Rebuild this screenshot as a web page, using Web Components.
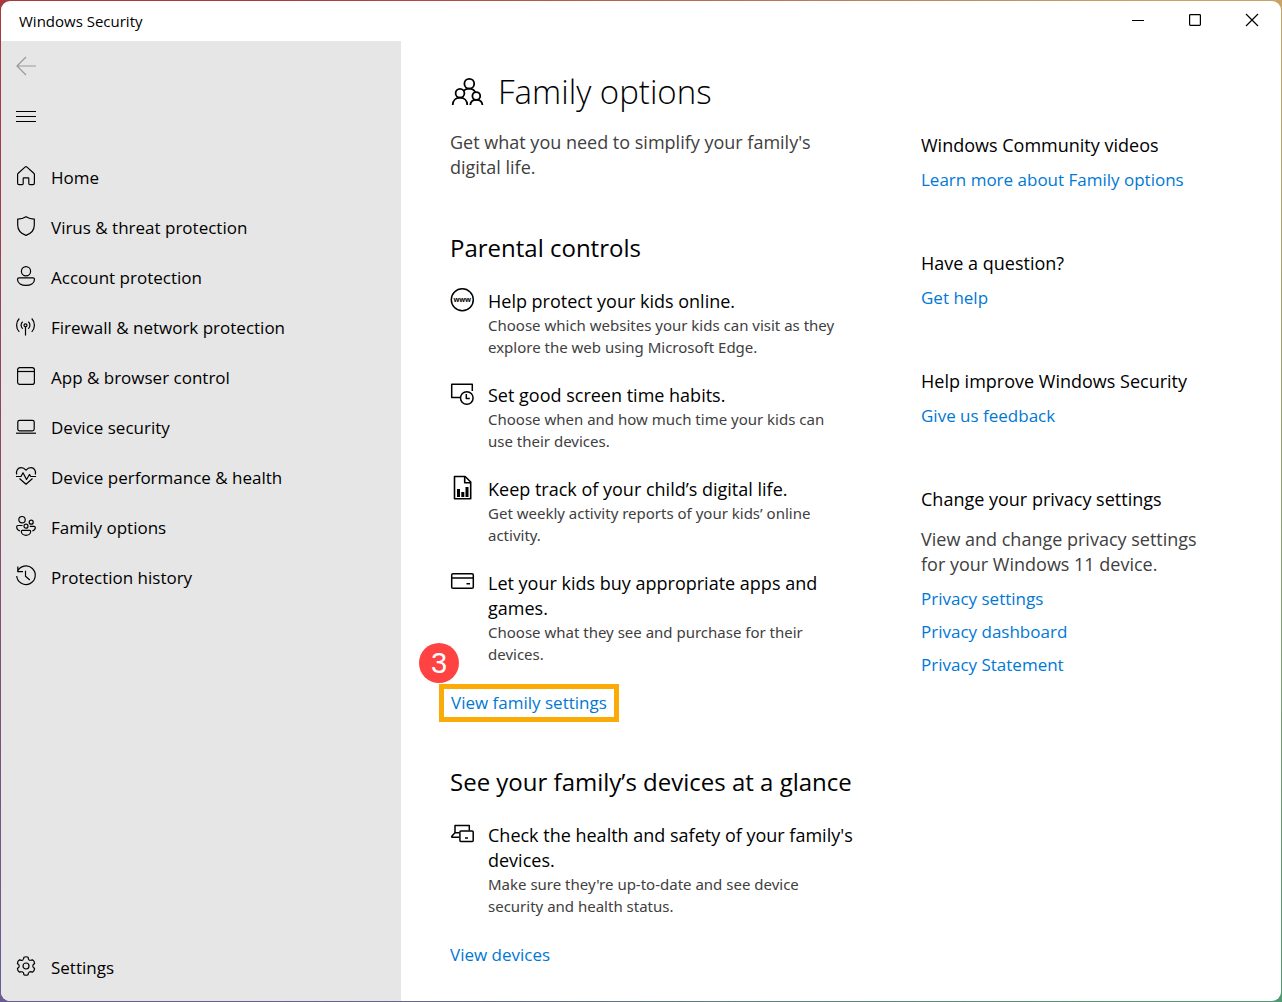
<!DOCTYPE html>
<html lang="en">
<head>
<meta charset="utf-8">
<title>Windows Security</title>
<style>
  html, body { margin: 0; }
  body {
    font-family: "Open Sans", "Noto Sans", sans-serif;
    color: #000;
    background: linear-gradient(#a8383e, #6a5c92);
  }
</style>
</head>
<body>
<app-window>
  <title-bar slot="title">Windows Security</title-bar>
  <side-nav slot="nav">
    <nav-item icon="home">Home</nav-item>
    <nav-item icon="shield">Virus &amp; threat protection</nav-item>
    <nav-item icon="account">Account protection</nav-item>
    <nav-item icon="firewall">Firewall &amp; network protection</nav-item>
    <nav-item icon="app">App &amp; browser control</nav-item>
    <nav-item icon="laptop">Device security</nav-item>
    <nav-item icon="heart">Device performance &amp; health</nav-item>
    <nav-item icon="family">Family options</nav-item>
    <nav-item icon="history">Protection history</nav-item>
    <nav-item slot="footer" icon="gear">Settings</nav-item>
  </side-nav>
  <family-page>
    <page-header icon="people">
      Family options
      <span slot="intro">Get what you need to simplify your family's digital life.</span>
    </page-header>
    <feature-group heading="Parental controls">
      <feature-item icon="www">Help protect your kids online.<span slot="detail">Choose which websites your kids can visit as they explore the web using Microsoft Edge.</span></feature-item>
      <feature-item icon="screentime">Set good screen time habits.<span slot="detail">Choose when and how much time your kids can use their devices.</span></feature-item>
      <feature-item icon="report">Keep track of your child’s digital life.<span slot="detail">Get weekly activity reports of your kids’ online activity.</span></feature-item>
      <feature-item icon="card">Let your kids buy appropriate apps and games.<span slot="detail">Choose what they see and purchase for their devices.</span></feature-item>
      <step-marker slot="action" step="3"><text-link>View family settings</text-link></step-marker>
    </feature-group>
    <feature-group heading="See your family’s devices at a glance">
      <feature-item icon="devices">Check the health and safety of your family's devices.<span slot="detail">Make sure they're up-to-date and see device security and health status.</span></feature-item>
      <text-link slot="action">View devices</text-link>
    </feature-group>
    <help-section slot="aside" heading="Windows Community videos">
      <text-link>Learn more about Family options</text-link>
    </help-section>
    <help-section slot="aside" heading="Have a question?">
      <text-link>Get help</text-link>
    </help-section>
    <help-section slot="aside" heading="Help improve Windows Security">
      <text-link>Give us feedback</text-link>
    </help-section>
    <help-section slot="aside" heading="Change your privacy settings">
      <span slot="text">View and change privacy settings for your Windows 11 device.</span>
      <text-link>Privacy settings</text-link>
      <text-link>Privacy dashboard</text-link>
      <text-link>Privacy Statement</text-link>
    </help-section>
  </family-page>
</app-window>

<script>
const TOOTH = '<path d="M-2.5-6.8L-2.1-8.7Q0-9.8 2.1-8.7L2.5-6.8Q3.2-5.6 4.64-5.57"/>';
const ICONS = {
  back: [20, 20, '<path stroke="#999" d="M20 10H1M10 1L1 10l9 9"/>'],
  menu: [20, 20, '<path stroke-width="1" d="M0 5.5h20M0 10.5h20M0 15.5h20"/>'],
  home: [20, 20, '<path d="M1.6 8.6q0-.8.6-1.3L9 1.1q1-.8 2 0l6.800 6.200q.6.500.6 1.300V17q0 1.600-1.500 1.600h-3q-1.100 0-1.100-1.100V12.400q0-.6-.6-.6H7.800q-.6 0-.6.6v5.100q0 1.100-1.100 1.100H3.100Q1.600 18.600 1.600 17z"/>'],
  shield: [20, 20, '<path d="M10 .7Q13.600 3 18.300 3.100V9c0 5-3 8.500-8.300 10.400C4.700 17.500 1.700 14 1.700 9V3.100Q6.400 3 10 .7z"/>'],
  account: [20, 20, '<circle cx="10" cy="5.200" r="4.600"/><path d="M3 11.900h14q1.500 0 1.500 1.500c0 4-4.200 6-8.500 6s-8.500-2-8.500-6q0-1.500 1.500-1.500z"/>'],
  firewall: [20, 20, '<circle cx="9.500" cy="9.300" r="1.500"/><path d="M9.500 10.800V19.600M6.700 5.800a4.600 4.600 0 0 0 0 7M12.300 5.800a4.600 4.600 0 0 1 0 7M3.300 2.500a9.500 9.500 0 0 0 0 13.300M15.700 2.500a9.500 9.500 0 0 1 0 13.300"/>'],
  app: [20, 20, '<rect x="1.600" y="1.600" width="16.800" height="16.800" rx="2.200"/><path d="M1.600 5.500h16.800"/>'],
  laptop: [20, 20, '<rect x="1.800" y="4.300" width="16.400" height="10.600" rx="1.800"/><path d="M0 17.200h20"/>'],
  heart: [20, 20, '<path d="M.7 8.500C-.3 4.500 2 1.600 5 1.600q3 0 5 2.600 2-2.600 5-2.600c3 0 5.300 2.900 4.300 6.900M0 10.500h5l2-3.700 3.500 6.700 3-5 1.300 2H20M3.500 12.500L10 18.200l6.500-5.700"/>'],
  family: [20, 20, '<circle cx="6" cy="3.700" r="3.200"/><circle cx="15.200" cy="6.200" r="2"/><circle cx="10" cy="10.200" r="2"/><path d="M6.300 14.300h7.400q1 0 1 1c0 2.700-2.500 4.100-4.700 4.100s-4.700-1.400-4.700-4.100q0-1 1-1zM6.500 9.500H2Q.7 9.500.7 10.800c0 2 1 3.500 3.200 4.100M13.800 10.300H18q1.300 0 1.300 1.300c0 1.700-.9 2.900-3 3.400"/>'],
  history: [20, 20, '<path d="M1.400 5.600A9.300 9.300 0 1 1 .7 10M1.800.5V5.700H7M9.500 4.700v5.500l4.300 3.800"/>'],
  gear: [20, 20, '<circle cx="10" cy="10" r="3"/>' + [0, 60, 120, 180, 240, 300].map(a => `<g transform="translate(10 10) rotate(${a})">${TOOTH}</g>`).join('')],
  people: [34, 28, '<g stroke-width="1.800"><circle cx="19.300" cy="5.700" r="4.900"/><circle cx="10" cy="15.300" r="4.400"/><circle cx="26.300" cy="18" r="3.900"/><path d="M2.700 27c.2-4.500 3.200-7.300 7.300-7.300s7.100 2.800 7.300 7.300M20.300 27c.2-3.100 2.600-5.100 6-5.100s5.900 2 6.100 5.100M13.700 12.600c1.400-1.300 3.300-2 5.600-2 2.800 0 4.800 1.300 5.900 3.600"/></g>'],
  www: [24, 24, '<circle cx="12.300" cy="10.700" r="11" stroke-width="1.500"/><g font-size="7" font-weight="700" text-anchor="middle" fill="#000" stroke="none"><text x="12.300" y="12.500">w</text><text x="6.600" y="12.500">w</text><text x="18" y="12.500">w</text></g>'],
  screentime: [24, 24, '<g stroke-width="1.500"><path d="M11 14.500H1.700V1.200h20.600V8"/><circle cx="16.800" cy="15" r="6.300"/><path d="M16.300 11v4.500h3.500"/></g>'],
  report: [24, 24, '<g stroke-width="1.600"><path d="M4.500-.5h10.700L20.700 5v16.700H4.500z"/><path d="M14.700-.5V5.800h6"/></g><path stroke="none" fill="#000" d="M7 12h3v8H7zM11.300 15h3v5h-3zM15.500 10h3v10h-3z"/>'],
  card: [24, 24, '<g stroke-width="1.500"><rect x="1.700" y="2.700" width="21.600" height="14.600" rx="1.300"/><path d="M1.700 7h21.600M16.500 12.800h3.500"/></g>'],
  devices: [24, 24, '<g stroke-width="1.500"><path d="M9.300 14.300H2.200q-.9-.1-.4-1L5 9.800V2.500h14.300V7.500M5 9.800H9.300"/><rect x="9.900" y="7.900" width="13.300" height="10.700" rx="1"/><path d="M15 15h3"/></g>'],
  minimize: [14, 14, '<path d="M0 7.500h12"/>'],
  maximize: [14, 14, '<rect x=".6" y="1.600" width="10.800" height="10.800" rx=".8"/>'],
  close: [14, 14, '<path d="M0 1l12 12M12 1L0 13"/>']
};

function define(name, html) {
  const template = document.createElement('template');
  customElements.define(name, class extends HTMLElement {
    connectedCallback() {
      if (this.shadowRoot) return;
      template.innerHTML = typeof html === 'function' ? html(this) : html;
      this.attachShadow({ mode: 'open' }).append(template.content.cloneNode(true));
    }
  });
}

define('ui-icon', el => {
  const [w, h, art] = ICONS[el.getAttribute('name')];
  return `<style>
    :host { display: block; flex: none; }
    svg { display: block; overflow: visible; font-family: inherit; }
  </style>
  <svg width="${w}" height="${h}" viewBox="0 0 ${w} ${h}" fill="none" stroke="#000" stroke-width="1.200" stroke-linejoin="round" aria-hidden="true">${art}</svg>`;
});

define('app-window', `<style>
    :host { display: block; position: relative; box-sizing: border-box; min-height: 100vh; padding: 1px; }
    :host::before {
      content: ""; position: absolute; inset: 0; z-index: -1;
      background: linear-gradient(#c8a566, #4f9a72);
      mask-image: linear-gradient(to right, transparent 20%, #000 90%);
    }
    .frame { display: flex; flex-direction: column; min-height: calc(100vh - 2px); border-radius: 9px; overflow: hidden; background: #fff; }
    .body { display: flex; flex: 1; }
  </style>
  <div class="frame"><slot name="title"></slot><div class="body"><slot name="nav"></slot><slot></slot></div></div>`);

define('title-bar', `<style>
    :host { display: flex; height: 40px; align-items: center; padding-left: 18px; font-size: 15px; }
    .title { flex: 1; }
    button { display: flex; width: 57px; height: 40px; align-items: center; justify-content: center; padding: 0 0 2px; border: 0; background: none; }
  </style>
  <span class="title"><slot></slot></span>
  <button aria-label="Minimize"><ui-icon name="minimize"></ui-icon></button>
  <button aria-label="Maximize"><ui-icon name="maximize"></ui-icon></button>
  <button aria-label="Close"><ui-icon name="close"></ui-icon></button>`);

define('side-nav', `<style>
    :host { display: flex; flex-direction: column; flex: none; width: 400px; box-sizing: border-box; padding-bottom: 8px; background: #e6e6e6; }
    button { display: flex; align-items: center; height: 50px; width: 50px; padding: 0 0 0 15px; border: 0; background: none; }
    nav { flex: 1; padding-top: 12px; }
  </style>
  <button aria-label="Back" disabled><ui-icon name="back"></ui-icon></button>
  <button aria-label="Menu"><ui-icon name="menu"></ui-icon></button>
  <nav><slot></slot></nav>
  <slot name="footer"></slot>`);

define('nav-item', el => `<style>
    :host { display: block; }
    a { display: flex; align-items: center; gap: 15px; height: 50px; padding-left: 15px; font-size: 17px; color: inherit; text-decoration: none; }
    ui-icon { margin-bottom: 4px; }
    span { padding-bottom: 2px; }
  </style>
  <a href="#"><ui-icon name="${el.getAttribute('icon')}"></ui-icon><span><slot></slot></span></a>`);

define('family-page', `<style>
    :host { display: flex; flex: 1; gap: 67px; padding: 31px 40px 27px 49px; align-items: flex-start; }
    main { flex: none; width: 404px; }
    aside { flex: 1; max-width: 300px; padding-top: 61px; display: flex; flex-direction: column; gap: 57px; }
  </style>
  <main><slot></slot></main>
  <aside><slot name="aside"></slot></aside>`);

define('page-header', el => `<style>
    :host { display: block; }
    h1 { display: flex; align-items: center; gap: 14px; margin: 0 0 18px; font-size: 33px; line-height: 40px; font-weight: 300; }
    p { margin: 0; font-size: 18px; line-height: 25px; color: #404040; }
  </style>
  <h1><ui-icon name="${el.getAttribute('icon')}"></ui-icon><span><slot></slot></span></h1>
  <p><slot name="intro"></slot></p>`);

define('feature-group', el => `<style>
    :host { display: block; margin-top: 51px; }
    :host(:last-of-type) { margin-top: 43px; }
    h2 { margin: 0 0 24px; font-size: 24px; line-height: 34px; font-weight: 400; }
    .list { display: flex; flex-direction: column; gap: 25px; }
    .action { display: flex; min-height: 38px; align-items: center; margin-top: 19px; }
  </style>
  <h2>${el.getAttribute('heading')}</h2>
  <div class="list"><slot></slot></div>
  <div class="action"><slot name="action"></slot></div>`);

define('feature-item', el => `<style>
    :host { display: flex; gap: 14px; align-items: flex-start; }
    h3, p { margin: 0; font-weight: 400; }
    h3 { font-size: 18px; line-height: 25px; }
    p { padding-right: 8px; font-family: "Noto Sans", "Open Sans", sans-serif; font-size: 15px; line-height: 22px; color: #404040; }
    div { flex: 1; }
  </style>
  <ui-icon name="${el.getAttribute('icon')}"></ui-icon>
  <div><h3><slot></slot></h3><p><slot name="detail"></slot></p></div>`);

define('text-link', `<style>
    :host { display: block; padding-bottom: 2px; }
    a { font-size: 17px; line-height: 25px; color: #0078d4; text-decoration: none; display: block; }
  </style>
  <a href="#"><slot></slot></a>`);

define('step-marker', el => `<style>
    :host { display: flex; position: relative; align-items: center; box-sizing: border-box; height: 38px; margin-left: -11px; padding: 0 7px; border: 5px solid #faab07; }
    .badge {
      position: absolute; left: -25px; top: -46px; width: 40px; height: 40px; border-radius: 50%;
      background: #ff4343; color: #fff; text-align: center; font: 29px/40px "Liberation Sans", sans-serif;
    }
  </style>
  <slot></slot><span class="badge">${el.getAttribute('step')}</span>`);

define('help-section', el => `<style>
    :host { display: block; }
    h3, p { margin: 0; font-size: 18px; line-height: 25px; font-weight: 400; }
    p { color: #404040; }
    ::slotted([slot="text"]) { display: block; margin-top: 15px; }
    .links { display: flex; flex-direction: column; gap: 6px; margin-top: 9px; }
  </style>
  <h3>${el.getAttribute('heading')}</h3>
  <p><slot name="text"></slot></p>
  <div class="links"><slot></slot></div>`);
</script>
</body>
</html>
